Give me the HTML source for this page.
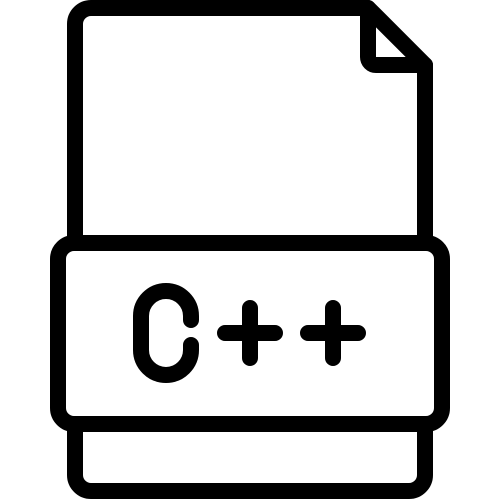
<!DOCTYPE html>
<html><head><style>html,body{margin:0;padding:0;background:#fff}svg{display:block}</style></head>
<body>
<svg width="500" height="500" viewBox="0 0 500 500" xmlns="http://www.w3.org/2000/svg" fill="none" stroke="#000" stroke-width="16" stroke-linecap="round" stroke-linejoin="round">
<path d="M75,243 V24 A16,16 0 0 1 91,8 H368 L425,65 V243"/>
<path d="M368,8 V57 A8,8 0 0 0 376,65 H425"/>
<path d="M75,425 V475 A16,16 0 0 0 91,491 H409 A16,16 0 0 0 425,475 V425"/>
<rect x="58" y="243" width="384" height="181" rx="16" fill="#fff"/>
<path d="M191,320 V316 A25,25 0 0 0 141,316 V350 A25,25 0 0 0 191,350 V345"/>
<path d="M250,308 V358 M225,333 H275"/>
<path d="M333,308 V358 M308,333 H358"/>
</svg>
</body></html>
